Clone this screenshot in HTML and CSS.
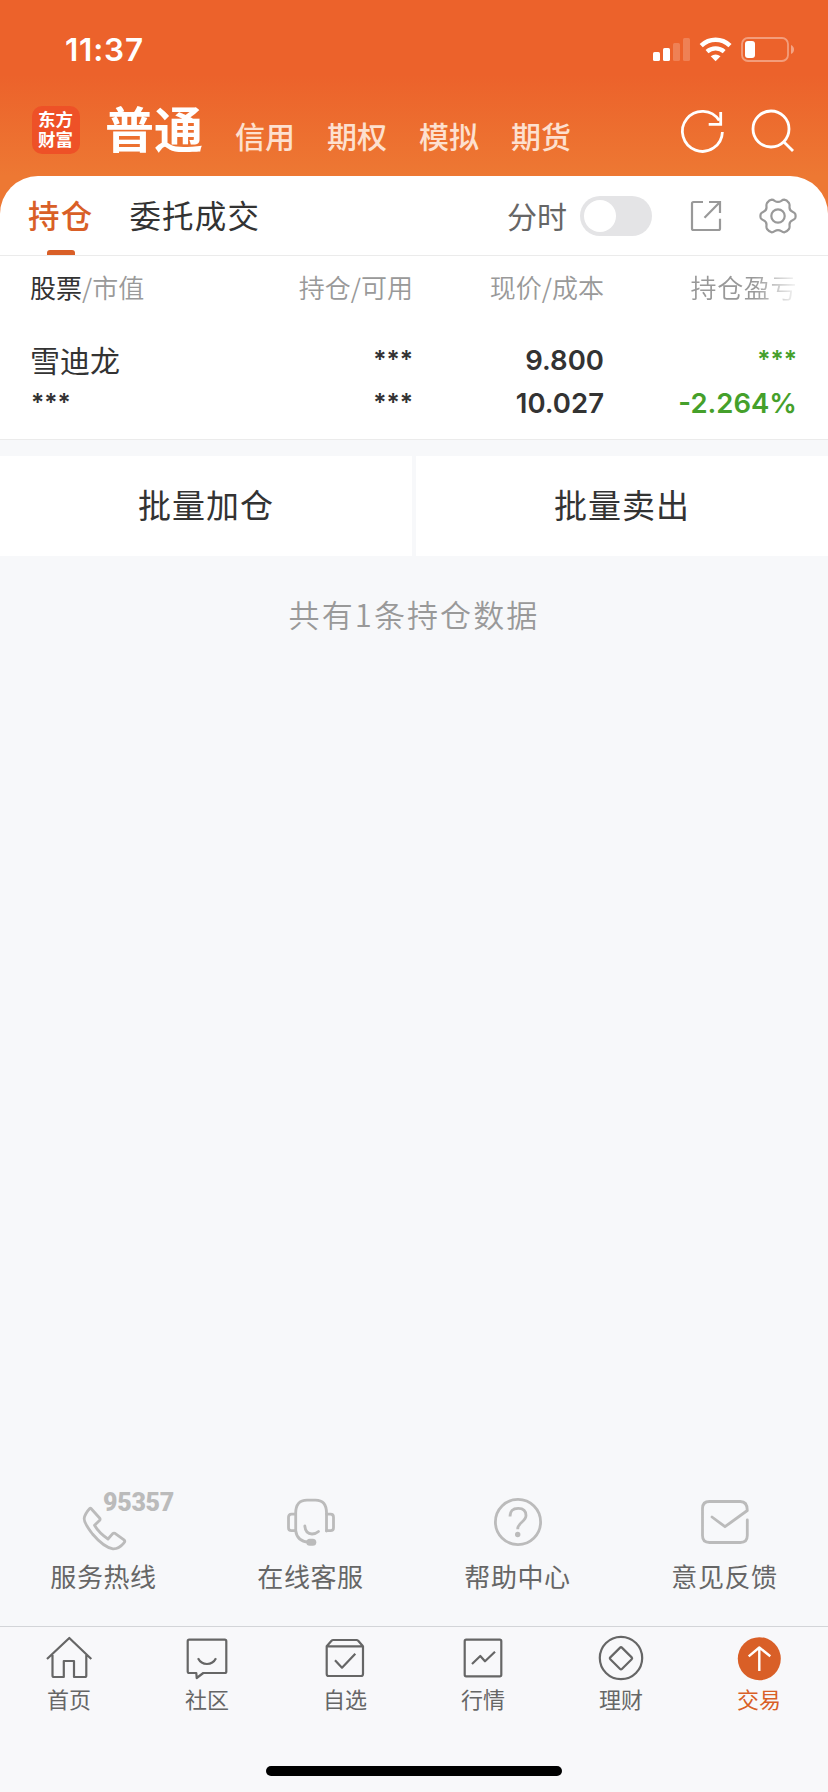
FILE: index.html
```html
<!DOCTYPE html>
<html lang="zh-CN">
    <head>
        <meta charset="utf-8">
        <meta name="viewport" content="width=device-width, initial-scale=1.0">
        <title>普通交易</title>
        <link rel="stylesheet" href="styles.css">
    </head>
    <body>
        <div class="status">
            <span class="time">11:37</span>
            <svg class="status-icons" width="142" height="26" viewBox="0 0 142 26" fill="#fff">
                <rect x="0" y="15" width="7" height="9" rx="1.6"/>
                <rect x="10" y="11" width="7" height="13" rx="1.6"/>
                <rect x="20" y="6" width="7" height="18" rx="1.6" opacity=".2"/>
                <rect x="30" y="1" width="7" height="23" rx="1.6" opacity=".2"/>
                <g fill="none" stroke="#fff">
                    <path d="M48.2 8.6Q54.5 2.8 62.6 2.8T77 8.6" stroke-width="4.6"/>
                    <path d="M54 14.6Q57.800 11.400 62.600 11.400T71.200 14.600" stroke-width="4.4"/>
                </g>
                <path d="M57.7 19.2Q62.6 15.6 67.5 19.2L62.6 24.2z"/>
                <rect x="89" y="1" width="46" height="23" rx="6" fill="none" stroke="#fff" stroke-width="1.8" opacity=".38"/>
                <rect x="92" y="4" width="10" height="17" rx="3"/>
                <path d="M138 8q3 1.500 3 4.500t-3 4.500z" opacity=".42"/>
            </svg>
        </div>

        <div class="header">
            <div class="logo"><span>东方</span><span>财富</span></div>
            <div class="modes">
                <span class="mode-on">普通</span>
                <span>信用</span>
                <span>期权</span>
                <span>模拟</span>
                <span>期货</span>
            </div>
            <svg class="refresh" width="44" height="44" viewBox="0 0 44 44">
                <path d="M41.400 23A20 20 0 1 1 38.200 11.500M39.700 3v12.300H27.700"/>
            </svg>
            <svg class="search" width="44" height="44" viewBox="0 0 44 44">
                <circle cx="20" cy="20" r="18"/>
                <path d="M32.700 32.700l9.300 9.300"/>
            </svg>
        </div>

        <div class="panel">
            <div class="tabs">
                <span class="tab tab-on">持仓</span>
                <span class="tab">委托成交</span>
                <span class="switch-label">分时</span>
                <span class="switch"><span class="knob"></span></span>
                <svg class="share" width="32" height="32" viewBox="0 0 32 32">
                    <path d="M13 2H3.500Q2 2 2 3.500V28.500Q2 30 3.500 30H28.500Q30 30 30 28.500V18.700M19 2H30V13M29.500 2.500L14.500 17.700"/>
                </svg>
                <svg class="gear" width="36" height="36" viewBox="0 0 36 36">
                    <circle cx="18" cy="18" r="6.700"/>
                    <path d="M35.200 15.800Q36 18 35.200 20.200 34.600 21.300 32.500 22.300 29.300 23.700 29.500 27 29.800 29.800 29 31 26.700 34 24.200 34.300 22.800 34.300 21.300 33.200 18 31 14.700 33.200 13.200 34.300 11.800 34.300 9.300 34 7 31 6.200 29.800 6.500 27 6.700 23.700 3.500 22.300 1.400 21.300 .8 20.200 0 18 .8 15.800 1.400 14.700 3.500 13.700 6.700 12.300 6.500 9 6.200 6.200 7 5 9.300 2 11.800 1.700 13.200 1.700 14.700 2.800 18 5 21.300 2.800 22.800 1.700 24.200 1.700 26.700 2 29 5 29.800 6.200 29.500 9 29.300 12.300 32.500 13.700 34.600 14.700 35.200 15.800z"/>
                </svg>
            </div>

            <div class="grid grid-head">
                <span><b>股票</b>/市值</span>
                <span>持仓/可用</span>
                <span>现价/成本</span>
                <span class="fade">持仓盈亏</span>
            </div>
            <div class="grid grid-row">
                <span class="name">雪迪龙</span>
                <span class="stars">***</span>
                <span>9.800</span>
                <span class="down stars">***</span>
                <span class="stars">***</span>
                <span class="stars">***</span>
                <span>10.027</span>
                <span class="down">-2.264%</span>
            </div>
        </div>

        <div class="batch">
            <div>批量加仓</div>
            <div>批量卖出</div>
        </div>

        <div class="total">共有1条持仓数据</div>

        <div class="services">
            <div class="service">
                <svg width="48" height="48" viewBox="0 0 48 48">
                    <path d="M11 10.500L19.800 20.300Q20.500 21.500 19.500 22.500L14.500 27.300Q19 35 28 41L32.500 35.800Q33.700 34.700 35 35.300L44 41.800Q45.500 43.300 44 44.800 39 51 33 50.800 24 49.500 12.500 36 4 25 4.200 20.500 4.800 16 9.500 10.800 10.300 10 11 10.500z"/>
                </svg>
                <span class="hotline">95357</span>
                <span>服务热线</span>
            </div>
            <div class="service">
                <svg width="48" height="48" viewBox="0 0 48 48">
                    <path d="M8.700 33V15Q8.700 2.200 20 2.200H28.500Q39.500 2.200 39.500 15V33"/>
                    <path d="M8.700 16.200H4.500Q1.500 16.200 1.500 19.200V29.700Q1.500 32.700 4.500 32.700H8.700M39.500 16.200H43.500Q46.500 16.200 46.500 19.200V29.700Q46.500 32.700 43.500 32.700H39.500"/>
                    <path d="M8.700 32.700Q10 43 21.500 44.200M17.800 28Q18.500 35.800 25 36 29 35.800 31.500 33.500"/>
                    <rect class="solid" x="19.300" y="40.700" width="10" height="7" rx="3.500"/>
                </svg>
                <span>在线客服</span>
            </div>
            <div class="service">
                <svg width="48" height="48" viewBox="0 0 48 48">
                    <circle cx="24" cy="24" r="22.600"/>
                    <path stroke-linecap="butt" d="M16 18.500Q16 10.300 24.200 10.300 32 10.300 32 17.500 32 20.500 28 24 23.700 27.500 23.700 31.200"/>
                    <circle class="solid" cx="23.700" cy="36.500" r="2.700"/>
                </svg>
                <span>帮助中心</span>
            </div>
            <div class="service">
                <svg width="48" height="48" viewBox="0 0 48 48">
                    <path d="M46.300 22V37.500Q46.300 44.500 39.300 44.500H8.500Q1.500 44.500 1.500 37.500V10.500Q1.500 3.500 8.500 3.500H39.300Q46.300 3.500 46.300 12.500L24 28.700 11 19"/>
                </svg>
                <span>意见反馈</span>
            </div>
        </div>

        <div class="tabbar">
            <div class="item">
                <svg width="44" height="44" viewBox="0 0 44 44">
                    <path d="M0 23L22.300 2 44.300 23M5.500 19V39.500Q5.500 41 7 41H16.800V25H27V41H37.800Q39.300 41 39.300 39.500V19"/>
                </svg>
                <span>首页</span>
            </div>
            <div class="item">
                <svg width="44" height="44" viewBox="0 0 44 44">
                    <path d="M4.200 3.700H39.800Q41.300 3.700 41.300 5.200V35.500Q41.300 37 39.800 37H18.300L11.700 42 11.300 37H4.200Q2.700 37 2.700 35.500V5.200Q2.700 3.700 4.200 3.700zM13 22.300Q16 28 22 28T31 22.300"/>
                </svg>
                <span>社区</span>
            </div>
            <div class="item">
                <svg width="44" height="44" viewBox="0 0 44 44">
                    <path d="M3.700 10.300H40V38Q40 40 38 40H5.700Q3.700 40 3.700 38V10.300L8.500 4.700Q9.200 4 10.200 4H33.500Q34.500 4 35.200 4.700L40 10.300M12 24.300L19 31.700 32.300 17.700"/>
                </svg>
                <span>自选</span>
            </div>
            <div class="item">
                <svg width="44" height="44" viewBox="0 0 44 44">
                    <rect x="3.700" y="3.700" width="36.600" height="36.600" rx="1.500"/>
                    <path d="M11 28L19.300 20 24 25.300 34 15.700"/>
                </svg>
                <span>行情</span>
            </div>
            <div class="item">
                <svg width="44" height="44" viewBox="0 0 44 44">
                    <circle cx="22" cy="22" r="21.200"/>
                    <path d="M21.100 11.600Q22 10.700 22.900 11.600L32.700 21.400Q33.600 22.300 32.700 23.200L22.900 33Q22 33.900 21.100 33L11.300 23.200Q10.400 22.300 11.300 21.400z"/>
                </svg>
                <span>理财</span>
            </div>
            <div class="item item-on">
                <svg width="44" height="44" viewBox="0 0 44 44">
                    <circle class="disc" cx="22.300" cy="22.700" r="21.500"/>
                    <path class="arrow" d="M22.300 35V11.700M11.700 20.300L22.300 11.500 33.300 20.300"/>
                </svg>
                <span>交易</span>
            </div>
            <div class="home-bar"></div>
        </div>
    </body>
</html>
```
FILE: styles.css
```css
* {
    box-sizing:border-box;
}

body {
    margin:0;
    width:828px;
    height:1792px;
    display:flex;
    flex-direction:column;
    overflow:hidden;
    font-family:"Noto Sans CJK SC", sans-serif;
    color:#333;
    white-space:nowrap;
    background:#f7f8fa linear-gradient(#ec622b 0, #ec622b 75px, #ed7833 176px) no-repeat 0 0 / 100% 240px;
}

svg {
    display:block;
    flex:none;
    overflow:visible;
    fill:none;
    stroke-linejoin:round;
}

.status {
    height:86px;
    display:flex;
    justify-content:space-between;
    align-items:flex-start;
    padding:32px 33px 0 65px;
}

.status-icons {
    margin-top:5px;
    fill:#fff;
}

.time {
    font:600 31.5px/36px Inter, sans-serif;
    letter-spacing:.8px;
    color:#fff;
}

.header {
    height:90px;
    display:flex;
    align-items:center;
    padding:0 33px 0 32px;
}

.header svg {
    stroke:#fff;
    stroke-width:2.8;
    stroke-linejoin:miter;
}

.logo {
    width:48px;
    height:48px;
    margin-top:-2px;
    padding:3px 0 0 6px;
    border-radius:10px;
    background:#ee5127;
    color:#fff;
    font-size:17.5px;
    font-weight:700;
    line-height:20px;
}

.logo span {
    display:block;
}

.modes {
    flex:1;
    display:flex;
    align-items:baseline;
    gap:32px;
    margin:-9px 0 0 25px;
    font-size:30px;
    font-weight:500;
    color:#fde0cf;
}

.mode-on {
    font-size:49px;
    font-weight:700;
    line-height:60px;
    color:#fff;
}

.refresh {
    margin-right:26px;
}

.panel {
    height:264px;
    background:#fff;
    border-radius:38px 38px 0 0;
    border-bottom:1px solid #ebebeb;
}

.tabs {
    height:80px;
    display:flex;
    align-items:center;
    padding:0 32px 0 28px;
    border-bottom:1px solid #ebebeb;
    color:#333;
}

.tab {
    height:79px;
    margin-right:36px;
    font-size:31.5px;
    line-height:76px;
    letter-spacing:1.2px;
}

.tab-on {
    position:relative;
    font-weight:500;
    color:#d95f27;
}

.tab-on::after {
    content:"";
    position:absolute;
    left:19px;
    bottom:0;
    width:28px;
    height:5px;
    border-radius:3px 3px 0 0;
    background:#d95f27;
}

.switch-label {
    margin-left:auto;
    font-size:30px;
    line-height:74px;
    padding-bottom:2px;
    color:#666;
}

.switch {
    width:72px;
    height:40px;
    margin-left:13px;
    padding:4px;
    border-radius:20px;
    background:#e4e4e6;
}

.knob {
    display:block;
    width:32px;
    height:32px;
    border-radius:50%;
    background:#fff;
}

.share, .gear {
    stroke:#999;
    stroke-width:2.2;
}

.share {
    margin-left:38px;
    stroke-linejoin:miter;
}

.gear {
    margin-left:38px;
}

.grid {
    display:grid;
    grid-template-columns:191px 191px 191px 193px;
    padding:0 31px 0 31px;
    text-align:right;
}

.grid span:nth-child(4n+1) {
    text-align:left;
}

.grid-head {
    padding-top:10px;
    font-size:26px;
    font-weight:350;
    line-height:42px;
    color:#999;
}

.grid-head span:nth-child(1) {
    margin-left:-1px;
}

.grid-head b {
    font-weight:400;
    color:#333;
}

.grid-head .fade {
    letter-spacing:.6px;
    -webkit-mask-image:linear-gradient(to right, #000 150px, transparent 197px);
    mask-image:linear-gradient(to right, #000 150px, transparent 197px);
}

.grid-row {
    padding-top:31px;
    grid-auto-rows:43px;
    font:600 27.5px/43px Inter, sans-serif;
}

.grid-row .name {
    margin-left:-1px;
    font:400 30px/40px "Noto Sans CJK SC", sans-serif;
}

.stars {
    font-size:24.5px;
    line-height:41px;
}

.down {
    color:#45a02b;
}

.batch {
    display:grid;
    grid-template-columns:1fr 1fr;
    gap:4px;
    padding-top:16px;
    background:#f7f8fa;
    text-align:center;
    font-size:33px;
    line-height:97px;
    letter-spacing:1px;
}

.batch div {
    height:100px;
    background:#fff;
}

.total {
    margin-top:34px;
    text-align:center;
    font-size:31px;
    font-weight:350;
    line-height:48px;
    letter-spacing:2.1px;
    color:#999;
}

.services {
    margin-top:auto;
    height:128px;
    display:grid;
    grid-template-columns:repeat(4, 1fr);
}

.service {
    position:relative;
    display:flex;
    flex-direction:column;
    align-items:center;
    font-size:26px;
    line-height:40px;
    letter-spacing:.6px;
    gap:10px;
    color:#666;
}

.service svg {
    stroke:#bbb;
    stroke-width:2.8;
    stroke-linecap:round;
}

.service .solid {
    fill:#bbb;
    stroke:none;
}

/* number sits over the top right of the handset */
.hotline {
    position:absolute;
    left:103px;
    top:-7px;
    font:900 25px/24px Roboto, sans-serif;
    letter-spacing:-.3px;
    color:#bbb;
}

.tabbar {
    position:relative;
    height:166px;
    display:grid;
    grid-template-columns:repeat(6, 1fr);
    padding-top:9px;
    border-top:1px solid #d3d5d8;
    background:#f8f8fa;
}

.item {
    display:flex;
    flex-direction:column;
    align-items:center;
    gap:3px;
    font-size:22px;
    line-height:30px;
    color:#666;
}

.item svg {
    stroke:#666;
    stroke-width:2.2;
}

.item-on {
    color:#d95f27;
}

.item-on .disc {
    fill:#d95f27;
    stroke:none;
}

.item-on .arrow {
    stroke:#fff;
    stroke-width:2.4;
}

.home-bar {
    position:absolute;
    left:266px;
    bottom:16px;
    width:296px;
    height:10px;
    border-radius:5px;
    background:#000;
}
```
